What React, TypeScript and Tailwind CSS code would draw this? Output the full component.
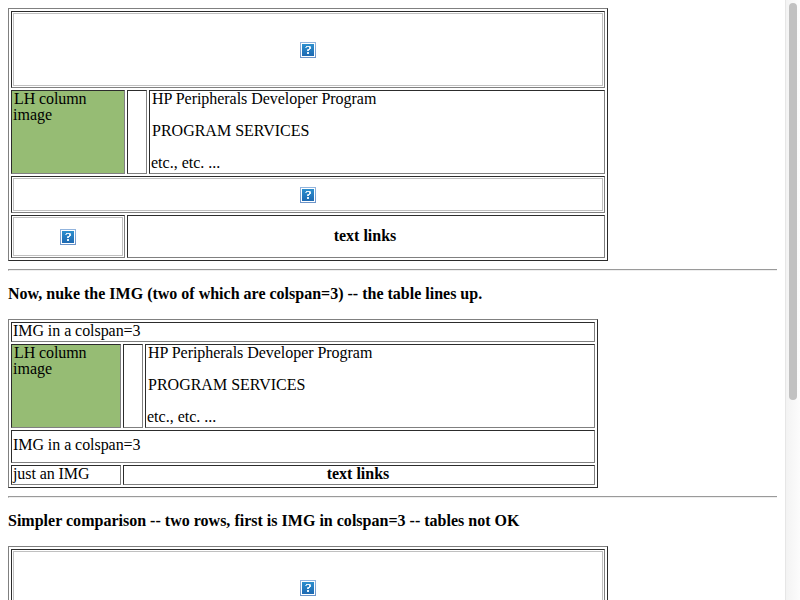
import type { ReactNode } from 'react';

function Cell({ className = '', children }: { className?: string; children?: ReactNode }) {
  return (
    <div className={`border border-t-[#2c2c2c] border-l-[#2c2c2c] border-r-[#808080] border-b-[#808080] ${className}`}>
      {children}
    </div>
  );
}

function Table({ className = '', children }: { className?: string; children: ReactNode }) {
  return (
    <div className={`flex shrink-0 flex-col gap-0.5 border border-t-[#808080] border-l-[#808080] border-r-[#2c2c2c] border-b-[#2c2c2c] p-0.5 ${className}`}>
      {children}
    </div>
  );
}

function MissingImage() {
  return (
    <div className="flex h-full items-center justify-center border border-[#c0c0c0]">
      <svg width="16" height="16" viewBox="0 0 16 16" shapeRendering="crispEdges">
        <defs>
          <linearGradient id="blue" x1="0" y1="0" x2="0" y2="1">
            <stop offset="0" stopColor="#2c8fce" />
            <stop offset="1" stopColor="#1d69b2" />
          </linearGradient>
          <linearGradient id="frame" x1="0" y1="0" x2="0" y2="1">
            <stop offset="0" stopColor="#93b5de" />
            <stop offset="1" stopColor="#6a93c8" />
          </linearGradient>
        </defs>
        <rect width="16" height="16" fill="url(#frame)" />
        <rect x="1" y="1" width="14" height="14" fill="#fff" />
        <rect x="2" y="2" width="12" height="12" fill="url(#blue)" />
        <path d="M6 4h4v1H6zM9 5h2v2H9zM8 7h2v1H8zM7 8h2v1H7zM7 10h2v2H7z" fill="#e8f2fa" />
        <path d="M5 5h2v1H5zM10 4h1v1h-1zM7 7h1v1H7z" fill="#a5cbe8" />
      </svg>
    </div>
  );
}

function Services() {
  return (
    <>
      <p className="ml-px w-max tracking-[-0.04px]">HP Peripherals Developer Program</p>
      <p className="mt-4 ml-px w-max">PROGRAM SERVICES</p>
      <p className="mt-4 w-max">etc., etc. ...</p>
    </>
  );
}

function Rule() {
  return <div className="mt-2 h-0.5 w-[769px] shrink-0 border-t border-b border-t-[#9a9a9a] border-b-[#eeeeee] border-l border-l-[#9a9a9a]" />;
}

function Column() {
  return <p className="ml-px tracking-[-0.1px]">LH column<br /><span className="-ml-px tracking-normal">image</span></p>;
}

export default function App() {
  return (
    <div className="flex h-[600px] w-[800px] overflow-hidden bg-white font-['Liberation_Serif',serif] text-[16px] leading-4 text-black">
      <main className="flex h-[600px] w-[785px] flex-col overflow-hidden pt-2 pl-2">
        <Table className="h-[253px] w-[600px]">
          <Cell className="h-[77px] p-px"><MissingImage /></Cell>
          <div className="flex h-[84px] gap-0.5">
            <Cell className="w-[114px] bg-[#96bc74] pl-px"><Column /></Cell>
            <Cell className="w-5" />
            <Cell className="w-[456px] pl-px"><Services /></Cell>
          </div>
          <Cell className="h-[37px] p-px"><MissingImage /></Cell>
          <div className="flex h-[43px] gap-0.5">
            <Cell className="w-[114px] p-px"><MissingImage /></Cell>
            <Cell className="flex w-[478px] items-center justify-center pr-0.5 pb-0.5"><b>text links</b></Cell>
          </div>
        </Table>
        <Rule />
        <p className="mt-[15px] mb-[17px] w-max shrink-0 font-bold">Now, nuke the IMG (two of which are colspan=3) -- the table lines up.</p>
        <Table className="h-[169px] w-[590px]">
          <Cell className="h-5 pl-px"><p className="w-max tracking-[-0.06px]">IMG in a colspan=3</p></Cell>
          <div className="flex h-[84px] gap-0.5">
            <Cell className="w-[110px] bg-[#96bc74] pl-px"><Column /></Cell>
            <Cell className="w-5" />
            <Cell className="w-[450px] pl-px"><Services /></Cell>
          </div>
          <Cell className="flex h-[33px] items-center pb-[3px] pl-px"><p className="w-max tracking-[-0.06px]">IMG in a colspan=3</p></Cell>
          <div className="flex h-5 gap-0.5">
            <Cell className="w-[110px] pl-px"><p className="w-max tracking-[-0.08px]">just an IMG</p></Cell>
            <Cell className="flex w-[472px] items-center justify-center pr-0.5 pb-0.5"><b>text links</b></Cell>
          </div>
        </Table>
        <Rule />
        <p className="mt-[15px] mb-[17px] w-max shrink-0 font-bold tracking-[0.01px]">Simpler comparison -- two rows, first is IMG in colspan=3 -- tables not OK</p>
        <Table className="h-[120px] w-[600px]">
          <Cell className="h-[77px] p-px"><MissingImage /></Cell>
        </Table>
      </main>
      <aside className="h-[600px] w-[15px] border-l border-[#e6e6e6] bg-linear-to-r from-[#f3f3f3] to-[#fcfcfc] pt-[3px] pl-[3px]">
        <div className="h-[397px] w-2 rounded-full bg-[#c1c1c1]" />
      </aside>
    </div>
  );
}
